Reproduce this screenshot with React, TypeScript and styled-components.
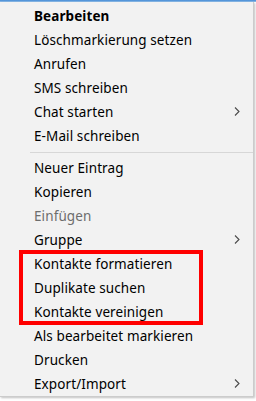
import React from 'react';
import styled, { createGlobalStyle } from 'styled-components';

interface MenuEntry {
  label?: string;
  bold?: boolean;
  disabled?: boolean;
  submenu?: boolean;
  separator?: boolean;
}

const entries: MenuEntry[] = [
  { label: 'Bearbeiten', bold: true },
  { label: 'Löschmarkierung setzen' },
  { label: 'Anrufen' },
  { label: 'SMS schreiben' },
  { label: 'Chat starten', submenu: true },
  { label: 'E-Mail schreiben' },
  { separator: true },
  { label: 'Neuer Eintrag' },
  { label: 'Kopieren' },
  { label: 'Einfügen', disabled: true },
  { label: 'Gruppe', submenu: true },
  { label: 'Kontakte formatieren' },
  { label: 'Duplikate suchen' },
  { label: 'Kontakte vereinigen' },
  { label: 'Als bearbeitet markieren' },
  { label: 'Drucken' },
  { label: 'Export/Import', submenu: true },
];

const GlobalStyle = createGlobalStyle`
  html, body {
    margin: 0;
    padding: 0;
    background: #ffffff;
  }
`;

const Screen = styled.div`
  position: relative;
  width: 256px;
  height: 401px;
  overflow: hidden;
  display: flex;
  flex-direction: column;
  font-family: 'Noto Sans', 'Open Sans', sans-serif;
`;

const WindowStrip = styled.div`
  height: 2px;
  flex-shrink: 0;
  background: linear-gradient(to bottom, #3c86d4 0, #9cc3ea 100%);
`;

const Menu = styled.ul`
  list-style: none;
  margin: 0;
  padding: 2px 0 0 0;
  width: 253px;
  flex-shrink: 0;
  background: #f2f2f2;
  border-right: 1px solid #cccccc;
  border-bottom: 1px solid #cccccc;
  box-shadow: 1px 1px 2px rgba(0, 0, 0, 0.25);
`;

const Item = styled.li<{ $bold?: boolean; $disabled?: boolean }>`
  display: flex;
  align-items: center;
  height: 24px;
  padding: 0 0 1px 34px;
  box-sizing: border-box;
  font-size: 13.5px;
  letter-spacing: 0.1px;
  font-weight: ${({ $bold }) => ($bold ? 700 : 400)};
  color: ${({ $disabled }) => ($disabled ? '#6d6d6d' : '#000000')};
  white-space: nowrap;
`;

const Label = styled.span`
  flex: 1;
`;

const Chevron = styled.svg`
  width: 6px;
  height: 9px;
  margin-right: 13px;
`;

const Separator = styled.li`
  height: 8px;
  display: flex;
  align-items: center;
  padding-left: 30px;

  &::after {
    content: '';
    flex: 1;
    height: 1px;
    background: #d7d7d7;
  }
`;

const BehindText = styled.div`
  padding: 2px 0 0 10px;
  font-size: 15px;
  color: #000;
  white-space: nowrap;
`;

const Highlight = styled.div`
  position: absolute;
  left: 19px;
  top: 250px;
  width: 184px;
  height: 75px;
  box-sizing: border-box;
  border: 4px solid #ff0000;
  pointer-events: none;
`;

export default function App() {
  return (
    <>
      <GlobalStyle />
      <Screen>
        <WindowStrip />
        <Menu>
          {entries.map((entry, i) =>
            entry.separator ? (
              <Separator key={i} />
            ) : (
              <Item key={i} $bold={entry.bold} $disabled={entry.disabled}>
                <Label>{entry.label}</Label>
                {entry.submenu && (
                  <Chevron viewBox="0 0 6 9">
                    <path d="M1 0.5 L5 4.5 L1 8.5" fill="none" stroke="#4a4a4a" strokeWidth="1.1" />
                  </Chevron>
                )}
              </Item>
            )
          )}
        </Menu>
        <BehindText>Familie Müller</BehindText>
        <Highlight />
      </Screen>
    </>
  );
}
